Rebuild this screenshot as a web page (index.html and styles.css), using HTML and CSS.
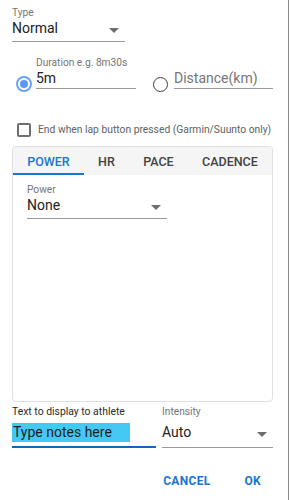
FILE: index.html
```html
<!DOCTYPE html>
<html>
<head>
<meta charset="utf-8">
<link rel="stylesheet" href="styles.css">
</head>
<body>
<div class="page">
  <div class="content">
    <div class="field f-type">
      <div class="label">Type</div>
      <div class="value">Normal<span class="arrow"></span></div>
    </div>

    <div class="radio-row">
      <span class="radio checked"><span class="dot"></span></span>
      <div class="field f-dur">
        <div class="label">Duration e.g. 8m30s</div>
        <div class="value">5m</div>
      </div>
      <span class="radio"></span>
      <div class="field f-dist">
        <div class="value placeholder">Distance(km)</div>
      </div>
    </div>

    <div class="check-row">
      <span class="checkbox"></span>
      <span class="check-text">End when lap button pressed (Garmin/Suunto only)</span>
    </div>

    <div class="tabs">
      <div class="tab-bar">
        <div class="tab active">POWER</div>
        <div class="tab">HR</div>
        <div class="tab">PACE</div>
        <div class="tab">CADENCE</div>
      </div>
      <div class="tab-body">
        <div class="field f-power">
          <div class="label">Power</div>
          <div class="value">None<span class="arrow"></span></div>
        </div>
      </div>
    </div>

    <div class="bottom-row">
      <div class="field f-notes">
        <div class="label dark">Text to display to athlete</div>
        <div class="value"><span class="hl">Type notes here</span></div>
      </div>
      <div class="field f-int">
        <div class="label">Intensity</div>
        <div class="value">Auto<span class="arrow"></span></div>
      </div>
    </div>

    <div class="actions">
      <button class="btn">CANCEL</button>
      <button class="btn">OK</button>
    </div>
  </div>
</div>
</body>
</html>
```

FILE: styles.css
```css
* { box-sizing: border-box; }
html, body { margin: 0; padding: 0; background: #fff; }
body { font-family: Roboto, "Noto Sans", Arial, sans-serif; color: #212121; }

.page {
  width: 289px;
  height: 500px;
  border-right: 1px solid #8a8a8a;
  overflow: hidden;
}
.content {
  width: 274px;
  padding-left: 12px;
  padding-right: 1px;
}

.field {
  border-bottom: 1px solid #9a9a9a;
  padding-bottom: 3px;
}
.label {
  font-size: 10.2px;
  line-height: 12px;
  height: 12px;
  color: #757575;
  white-space: nowrap;
}
.label.dark { color: #2a2a2a; font-size: 10.4px; }
.value {
  font-size: 14px;
  line-height: 19px;
  height: 19px;
  color: #222;
  display: flex;
  justify-content: space-between;
  white-space: nowrap;
}
.value.placeholder { color: #767676; }
.arrow {
  width: 0;
  height: 0;
  border-left: 5px solid transparent;
  border-right: 5px solid transparent;
  border-top: 5px solid #6e6e6e;
  margin-top: 9px;
  margin-right: 6px;
}

.f-type { width: 113px; margin-top: 7px; }

.radio-row {
  display: flex;
  align-items: flex-end;
  margin-top: 15px;
  padding-left: 4px;
}
.radio {
  width: 16px;
  height: 16px;
  border-radius: 50%;
  border: 1.5px solid #3d3d3d;
  flex: none;
  margin-bottom: -3px;
  display: flex;
  align-items: center;
  justify-content: center;
}
.radio.checked { border: 2px solid #6aa3f6; }
.radio .dot {
  width: 8px;
  height: 8px;
  border-radius: 50%;
  background: #5b98f3;
}
.f-dur { width: 100px; margin-left: 4px; padding-bottom: 0; }
.radio-row .radio:not(.checked) { margin-left: 17px; width: 15px; height: 15px; }
.f-dist { flex: 1; margin-left: 6px; padding-bottom: 0; }

.check-row {
  display: flex;
  align-items: center;
  margin-top: 34px;
  height: 14px;
}
.checkbox {
  width: 14px;
  height: 14px;
  border: 2px solid #6f6f6f;
  border-radius: 2px;
  margin-left: 5px;
  margin-right: 7px;
  flex: none;
}
.check-text {
  font-size: 10.3px;
  line-height: 14px;
  color: #616161;
  white-space: nowrap;
}

.tabs {
  margin-top: 9px;
  width: 261px;
  height: 256px;
  border: 1px solid #e0e0e0;
  border-radius: 4px;
  overflow: hidden;
}
.tab-bar {
  display: flex;
  background: #f5f5f5;
  height: 28px;
}
.tab {
  flex: 1 1 auto;
  padding: 0 14px;
  font-size: 12.5px;
  font-weight: 500;
  color: #424242;
  display: flex;
  align-items: center;
  justify-content: center;
  border-bottom: 2px solid transparent;
  padding-top: 2px;
}
.tab.active {
  color: #1976d2;
  border-bottom-color: #1976d2;
}
.tab-body { padding: 9px 0 0 14px; }
.f-power { width: 140px; }

.bottom-row {
  display: flex;
  margin-top: 4px;
}
.f-notes {
  width: 144px;
  border-bottom: 2px solid #1565c0;
  padding-bottom: 4px;
}
.f-notes .label { height: 17px; }
.f-notes .value { color: #1d1d1d; }
.hl {
  background: #45c8f4;
  padding-left: 1px;
  padding-right: 18px;
}
.f-int {
  flex: 1;
  margin-left: 6px;
  padding-bottom: 5px;
}
.f-int .label { height: 17px; }

.actions {
  display: flex;
  justify-content: flex-end;
  margin-top: 26px;
  padding-right: 0;
}
.btn {
  background: none;
  border: none;
  font-family: Roboto, Arial, sans-serif;
  font-size: 12px;
  font-weight: 700;
  color: #1976d2;
  letter-spacing: 0.3px;
  padding: 0;
  line-height: 14px;
}
.btn + .btn { margin-left: 34px; margin-right: 12px; }
```
